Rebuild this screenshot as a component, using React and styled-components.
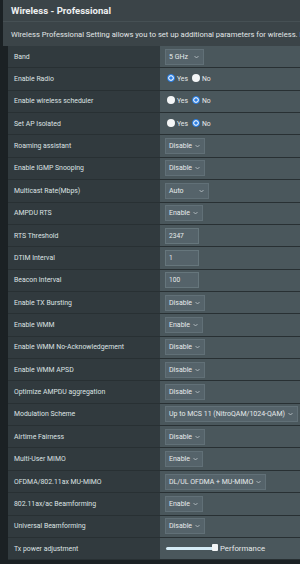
import React from "react";
import styled, { createGlobalStyle } from "styled-components";

const Global = createGlobalStyle`
  html, body { margin: 0; padding: 0; background: #1b2124; }
  body { font-family: Roboto, "Liberation Sans", Arial, sans-serif; width: 300px; height: 564px; overflow: hidden; }
`;

const Page = styled.div`
  width: 300px;
  height: 564px;
  overflow: hidden;
  background: #1b2124;
`;

const Header = styled.div`
  margin-left: 3px;
  background: #3b4448;
  height: 46px;
  display: flex;
  flex-direction: column;
`;

const Title = styled.div`
  height: 21px;
  display: flex;
  align-items: center;
  padding-left: 8px;
  font-size: 9.6px;
  font-weight: 700;
  color: #eef0f1;
  border-bottom: 1px solid #465054;
  white-space: nowrap;
`;

const Desc = styled.div`
  flex: 1;
  display: flex;
  align-items: center;
  padding-left: 8px;
  font-size: 7.6px;
  color: #e2e6e7;
  white-space: nowrap;
  overflow: hidden;
`;

const Table = styled.div`
  margin-left: 8px;
  display: flex;
  flex-direction: column;
`;

const Row = styled.div`
  display: grid;
  grid-template-columns: 152px 1fr;
  height: 22.36px;
  box-sizing: border-box;
  border-bottom: 1px solid #283033;
`;

const Label = styled.div`
  background: #313a3e;
  display: flex;
  align-items: center;
  padding-left: 6px;
  font-size: 6.9px;
  color: #dde2e3;
  white-space: nowrap;
`;

const Value = styled.div`
  background: #4a575c;
  display: flex;
  align-items: center;
  padding-left: 5px;
  gap: 4px;
  white-space: nowrap;
  overflow: hidden;
`;

const SelectBox = styled.div`
  height: 16px;
  box-sizing: border-box;
  min-width: ${(p) => p.$w || 37}px;
  padding: 0 4px 0 3px;
  display: flex;
  align-items: center;
  justify-content: space-between;
  gap: 3px;
  background: #55636a;
  border: 1px solid #617077;
  color: #e6eaeb;
  font-size: 7px;
  flex-shrink: 0;
`;

const Chevron = styled.svg`
  width: 5px;
  height: 4px;
  flex-shrink: 0;
`;

const InputBox = styled.div`
  width: 34px;
  height: 16px;
  box-sizing: border-box;
  padding-left: 3px;
  display: flex;
  align-items: center;
  background: #55636a;
  border: 1px solid #66767c;
  color: #e6eaeb;
  font-size: 6.6px;
`;

const RadioGroup = styled.div`
  display: flex;
  align-items: center;
  gap: 4px;
  padding-left: 2px;
`;

const RadioItem = styled.div`
  display: flex;
  align-items: center;
  gap: 2px;
  font-size: 6.8px;
  color: #e6eaeb;
`;

const RadioDot = styled.span`
  width: 8px;
  height: 8px;
  border-radius: 50%;
  box-sizing: border-box;
  background: ${(p) => (p.$on ? "#2a7fe6" : "#f4f6f7")};
  border: ${(p) => (p.$on ? "1.4px solid #2a7fe6" : "none")};
  box-shadow: ${(p) => (p.$on ? "inset 0 0 0 1.2px #f4f6f7" : "none")};
  margin-top: -2px;
`;

const SliderWrap = styled.div`
  display: flex;
  align-items: center;
  gap: 6px;
  padding-left: 1px;
`;

const Track = styled.div`
  position: relative;
  width: 48px;
  height: 3px;
  border-radius: 2px;
  background: #d6edf7;
`;

const Thumb = styled.div`
  position: absolute;
  right: -4px;
  top: -3px;
  width: 6px;
  height: 7px;
  border-radius: 1px;
  background: #f4f6f7;
`;

const SliderText = styled.span`
  font-size: 7.8px;
  color: #e6eaeb;
`;

const Select = ({ text, w }) => (
  <SelectBox $w={w}>
    <span>{text}</span>
    <Chevron viewBox="0 0 5 4">
      <path d="M0.5 1 L2.5 3 L4.5 1" fill="none" stroke="#cfd6d9" strokeWidth="0.7" />
    </Chevron>
  </SelectBox>
);

const Radios = ({ yes }) => (
  <RadioGroup>
    <RadioItem>
      <RadioDot $on={yes} />
      Yes
    </RadioItem>
    <RadioItem>
      <RadioDot $on={!yes} />
      No
    </RadioItem>
  </RadioGroup>
);

const rows = [
  ["Band", { t: "sel", v: "5 GHz", w: 39 }],
  ["Enable Radio", { t: "radio", yes: true }],
  ["Enable wireless scheduler", { t: "radio", yes: false }],
  ["Set AP Isolated", { t: "radio", yes: false }],
  ["Roaming assistant", { t: "sel", v: "Disable" }],
  ["Enable IGMP Snooping", { t: "sel", v: "Disable" }],
  ["Multicast Rate(Mbps)", { t: "sel", v: "Auto", w: 44 }],
  ["AMPDU RTS", { t: "sel", v: "Enable" }],
  ["RTS Threshold", { t: "input", v: "2347" }],
  ["DTIM Interval", { t: "input", v: "1" }],
  ["Beacon Interval", { t: "input", v: "100" }],
  ["Enable TX Bursting", { t: "sel", v: "Disable" }],
  ["Enable WMM", { t: "sel", v: "Enable" }],
  ["Enable WMM No-Acknowledgement", { t: "sel", v: "Disable" }],
  ["Enable WMM APSD", { t: "sel", v: "Disable" }],
  ["Optimize AMPDU aggregation", { t: "sel", v: "Disable" }],
  ["Modulation Scheme", { t: "sel", v: "Up to MCS 11 (NitroQAM/1024-QAM)" }],
  ["Airtime Fairness", { t: "sel", v: "Disable" }],
  ["Multi-User MIMO", { t: "sel", v: "Enable" }],
  ["OFDMA/802.11ax MU-MIMO", { t: "sel", v: "DL/UL OFDMA + MU-MIMO" }],
  ["802.11ax/ac Beamforming", { t: "sel", v: "Enable" }],
  ["Universal Beamforming", { t: "sel", v: "Disable" }],
  ["Tx power adjustment", { t: "slider" }],
];

const renderControl = (c) => {
  if (c.t === "sel") return <Select text={c.v} w={c.w} />;
  if (c.t === "radio") return <Radios yes={c.yes} />;
  if (c.t === "input") return <InputBox>{c.v}</InputBox>;
  return (
    <SliderWrap>
      <Track>
        <Thumb />
      </Track>
      <SliderText>Performance</SliderText>
    </SliderWrap>
  );
};

export default function App() {
  return (
    <Page>
      <Global />
      <Header>
        <Title>Wireless - Professional</Title>
        <Desc>
          Wireless Professional Setting allows you to set up additional parameters for wireless. B
        </Desc>
      </Header>
      <Table>
        {rows.map(([label, c]) => (
          <Row key={label}>
            <Label>{label}</Label>
            <Value>{renderControl(c)}</Value>
          </Row>
        ))}
      </Table>
    </Page>
  );
}
